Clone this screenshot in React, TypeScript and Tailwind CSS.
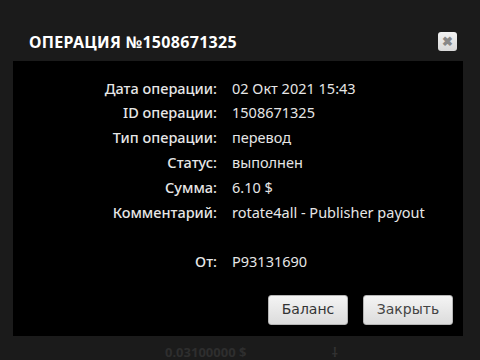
const rows: [string, string][] = [
  ["Дата операции:", "02 Окт 2021 15:43"],
  ["ID операции:", "1508671325"],
  ["Тип операции:", "перевод"],
  ["Статус:", "выполнен"],
  ["Сумма:", "6.10 $"],
  ["Комментарий:", "rotate4all - Publisher payout"],
];

export default function App() {
  return (
    <div className="w-[480px] h-[360px] bg-[#1b1b1b] overflow-hidden relative font-['Noto_Sans',sans-serif]">
      <div className="flex items-center justify-between pl-[29px] pr-[23px] pt-[32px] h-[61px] pb-[10px]">
        <h1 className="text-white font-bold text-[16px] tracking-[0.3px] leading-none">
          ОПЕРАЦИЯ №1508671325
        </h1>
        <button className="w-[19px] h-[19px] rounded-[3px] bg-gradient-to-b from-[#f2f2f2] to-[#d8d8d8] flex items-center justify-center text-[#888] text-[13px] font-bold leading-none">
          ✖
        </button>
      </div>
      <div className="mx-[13px] w-[450px] h-[275px] bg-black pt-[15px] flex flex-col">
        <div className="flex flex-col">
          {rows.map(([k, v]) => (
            <div key={k} className="flex h-[24.8px] items-center text-[14.5px] text-[#e6e6e6]">
              <div className="w-[204px] text-right font-medium">{k}</div>
              <div className="pl-[15px]">{v}</div>
            </div>
          ))}
          <div className="flex h-[24.8px] items-center text-[14.5px] text-[#e6e6e6] mt-[25px]">
            <div className="w-[204px] text-right font-medium">От:</div>
            <div className="pl-[15px]">P93131690</div>
          </div>
        </div>
        <div className="flex justify-end gap-[15px] pr-[10px] mt-[20px]">
          <button className="w-[80px] h-[30px] rounded-[3px] border border-[#b5b5b5] bg-gradient-to-b from-[#f4f4f4] to-[#dcdcdc] text-[#333] text-[14px] font-['DejaVu_Sans',sans-serif]">
            Баланс
          </button>
          <button className="w-[90px] h-[30px] rounded-[3px] border border-[#b5b5b5] bg-gradient-to-b from-[#f4f4f4] to-[#dcdcdc] text-[#444] text-[14px] font-['DejaVu_Sans',sans-serif]">
            Закрыть
          </button>
        </div>
      </div>
      <div className="flex items-center pl-[165px] pt-[7px] text-[#2e2e2e] text-[13px] font-bold">
        <span>0.03100000 $</span>
        <span className="ml-[85px] text-[#333]">⸸</span>
      </div>
    </div>
  );
}
